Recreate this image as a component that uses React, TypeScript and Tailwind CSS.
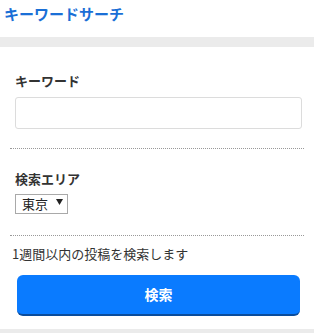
import React from 'react';

const font = { fontFamily: '"Noto Sans CJK JP", "Noto Sans", sans-serif' };

export default function App() {
  return (
    <div className="w-[314px] h-[333px] bg-white overflow-hidden text-[#333]" style={font}>
      <div className="h-[37px] pl-[4px] pt-[6px]">
        <h1 className="text-[15px] leading-[16px] font-bold text-[#1a6fd6] tracking-[0px]">キーワードサーチ</h1>
      </div>
      <div className="h-[10px] bg-[#ebebeb]" />

      <div className="mx-[10px] pt-[27px] pb-[19px] border-b border-dotted border-[#999]">
        <label className="block px-[5px] text-[13px] leading-[14px] font-bold text-[#333]">キーワード</label>
        <input
          type="text"
          className="block ml-[5px] mt-[9px] w-[287px] h-[32px] border border-[#dcdcdc] rounded-[3px] px-2 text-[13px] outline-none"
        />
      </div>

      <div className="mx-[10px] pt-[23px] pb-[21px] border-b border-dotted border-[#999]">
        <label className="block px-[5px] text-[13px] leading-[14px] font-bold text-[#333]">検索エリア</label>
        <div className="ml-[5px] mt-[8px] w-[53px] h-[20px] border border-[#a9a9a9] flex items-center pl-[6px] gap-[8px]">
          <span className="text-[13px] leading-[14px] text-[#222]">東京</span>
          <svg width="7" height="6" viewBox="0 0 7 6" className="-mt-[4px]">
            <path d="M0 0 H7 L3.5 6 Z" fill="#222" />
          </svg>
        </div>
      </div>

      <p className="pl-[12px] pt-[11px] text-[13px] leading-[14px] text-[#333]">1週間以内の投稿を検索します</p>

      <button className="block ml-[17px] mt-[14px] w-[283px] h-[41px] rounded-[6px] bg-[#0a7bff] border-b-2 border-[#0a4c9c] text-white text-[14px] font-bold">
        検索
      </button>

      <div className="mt-[13px] h-[10px] bg-[#ebebeb]" />
    </div>
  );
}
